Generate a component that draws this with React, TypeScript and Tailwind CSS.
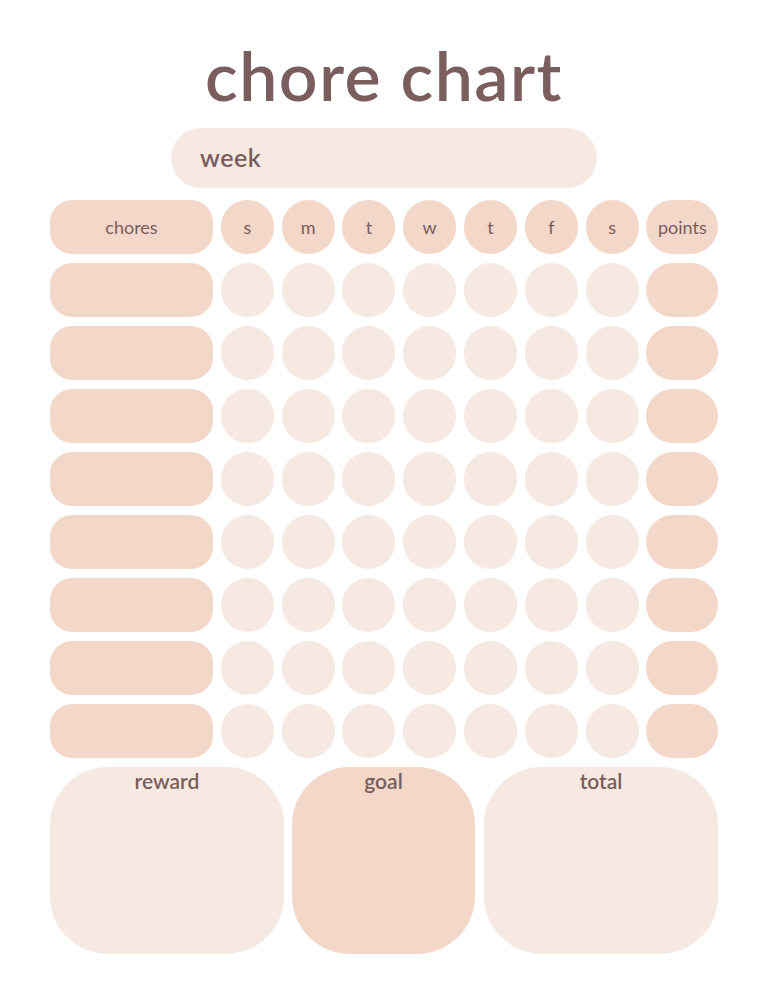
const days = ["s", "m", "t", "w", "t", "f", "s"];
const rows = Array.from({ length: 8 });

const font = { fontFamily: '"Lato", "Noto Sans", sans-serif' };

export default function App() {
  return (
    <div className="min-h-screen w-[768px] bg-white text-[#7a5d5d]" style={font}>
      <div className="flex flex-col px-[50px] pt-[34px]">
        <h1 className="text-center text-[68px] font-semibold leading-[82px] tracking-[1.5px]">chore chart</h1>

        <div className="mx-auto mt-[12px] flex h-[60px] w-[426px] items-center rounded-full bg-[#f6e9e2] pl-[29px]">
          <span className="text-[25px] font-semibold tracking-[0.5px]">week</span>
        </div>

        <div className="mt-[12px] grid grid-cols-[163px_repeat(7,53px)_72px] gap-x-[7.8px] gap-y-[9px]">
          <div className="flex h-[54px] items-center justify-center rounded-[22px] bg-[#f3d7c8] text-[18px]">chores</div>
          {days.map((d, i) => (
            <div key={i} className="flex h-[54px] items-center justify-center rounded-full bg-[#f3d7c8] text-[18px]">
              {d}
            </div>
          ))}
          <div className="flex h-[54px] items-center justify-center rounded-full bg-[#f3d7c8] text-[18px]">points</div>

          {rows.map((_, r) => (
            <div key={r} className="contents">
              <div className="h-[54px] rounded-[22px] bg-[#f3d7c8]" />
              {days.map((_, i) => (
                <div key={i} className="h-[54px] rounded-full bg-[#f6e9e2]" />
              ))}
              <div className="h-[54px] rounded-full bg-[#f3d7c8]" />
            </div>
          ))}
        </div>

        <div className="mt-[9px] flex gap-[8px]">
          <div className="flex h-[187px] w-[234px] justify-center rounded-[58px] bg-[#f6e9e2] text-[21px] font-semibold leading-[28px]">reward</div>
          <div className="flex h-[187px] w-[183px] justify-center rounded-[58px] bg-[#f3d7c8] text-[21px] font-semibold leading-[28px]">goal</div>
          <div className="ml-[1px] flex h-[187px] w-[234px] justify-center rounded-[58px] bg-[#f6e9e2] text-[21px] font-semibold leading-[28px]">total</div>
        </div>
      </div>
    </div>
  );
}
